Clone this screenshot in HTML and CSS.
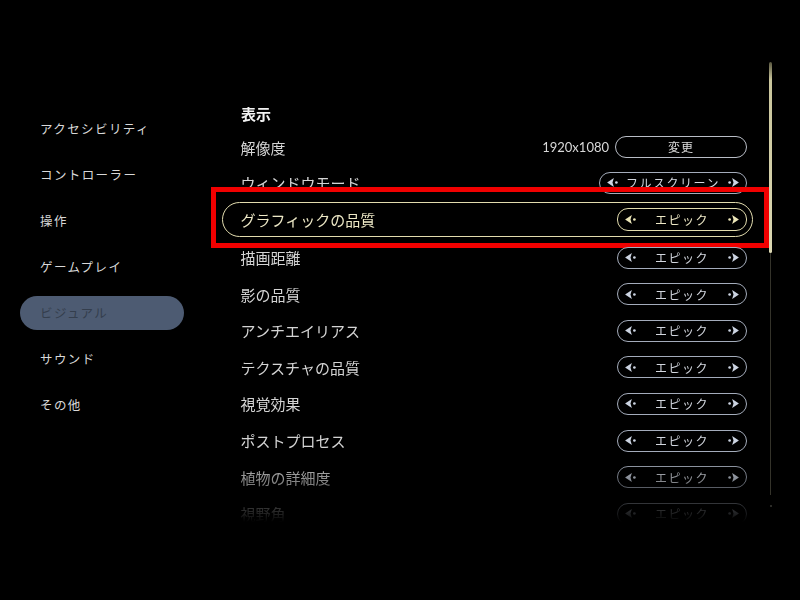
FILE: index.html
```html
<!DOCTYPE html>
<html lang="ja">
<head>
<meta charset="utf-8">
<title>設定 - ビジュアル</title>
<link rel="stylesheet" href="styles.css">
</head>
<body>
<div class="screen">
  <nav class="sidebar">
    <div class="nav-item">アクセシビリティ</div>
    <div class="nav-item">コントローラー</div>
    <div class="nav-item">操作</div>
    <div class="nav-item">ゲームプレイ</div>
    <div class="nav-item active">ビジュアル</div>
    <div class="nav-item">サウンド</div>
    <div class="nav-item">その他</div>
  </nav>
  <main class="main">
    <div class="list">
      <div class="section-title">表示</div>
      <div class="row short">
        <span class="label">解像度</span>
        <div class="control">
          <span class="res">1920x1080</span>
          <span class="button">変更</span>
        </div>
      </div>
      <div class="row">
        <span class="label">ウィンドウモード</span>
        <div class="selector wide">
          <svg class="arrow" viewBox="0 0 12 10"><path d="M0 5 L7.5 0 L6 5 L7.5 10 Z"/><circle cx="10.3" cy="5" r="1.5"/></svg>
          <span class="value">フルスクリーン</span>
          <svg class="arrow" viewBox="0 0 12 10"><path d="M12 5 L4.5 0 L6 5 L4.5 10 Z"/><circle cx="1.7" cy="5" r="1.5"/></svg>
        </div>
      </div>
      <div class="row focused">
        <span class="label">グラフィックの品質</span>
        <div class="selector">
          <svg class="arrow" viewBox="0 0 12 10"><path d="M0 5 L7.5 0 L6 5 L7.5 10 Z"/><circle cx="10.3" cy="5" r="1.5"/></svg>
          <span class="value">エピック</span>
          <svg class="arrow" viewBox="0 0 12 10"><path d="M12 5 L4.5 0 L6 5 L4.5 10 Z"/><circle cx="1.7" cy="5" r="1.5"/></svg>
        </div>
        <div class="callout"></div>
      </div>
      <div class="row">
        <span class="label">描画距離</span>
        <div class="selector">
          <svg class="arrow" viewBox="0 0 12 10"><path d="M0 5 L7.5 0 L6 5 L7.5 10 Z"/><circle cx="10.3" cy="5" r="1.5"/></svg>
          <span class="value">エピック</span>
          <svg class="arrow" viewBox="0 0 12 10"><path d="M12 5 L4.5 0 L6 5 L4.5 10 Z"/><circle cx="1.7" cy="5" r="1.5"/></svg>
        </div>
      </div>
      <div class="row">
        <span class="label">影の品質</span>
        <div class="selector">
          <svg class="arrow" viewBox="0 0 12 10"><path d="M0 5 L7.5 0 L6 5 L7.5 10 Z"/><circle cx="10.3" cy="5" r="1.5"/></svg>
          <span class="value">エピック</span>
          <svg class="arrow" viewBox="0 0 12 10"><path d="M12 5 L4.5 0 L6 5 L4.5 10 Z"/><circle cx="1.7" cy="5" r="1.5"/></svg>
        </div>
      </div>
      <div class="row">
        <span class="label">アンチエイリアス</span>
        <div class="selector">
          <svg class="arrow" viewBox="0 0 12 10"><path d="M0 5 L7.5 0 L6 5 L7.5 10 Z"/><circle cx="10.3" cy="5" r="1.5"/></svg>
          <span class="value">エピック</span>
          <svg class="arrow" viewBox="0 0 12 10"><path d="M12 5 L4.5 0 L6 5 L4.5 10 Z"/><circle cx="1.7" cy="5" r="1.5"/></svg>
        </div>
      </div>
      <div class="row">
        <span class="label">テクスチャの品質</span>
        <div class="selector">
          <svg class="arrow" viewBox="0 0 12 10"><path d="M0 5 L7.5 0 L6 5 L7.5 10 Z"/><circle cx="10.3" cy="5" r="1.5"/></svg>
          <span class="value">エピック</span>
          <svg class="arrow" viewBox="0 0 12 10"><path d="M12 5 L4.5 0 L6 5 L4.5 10 Z"/><circle cx="1.7" cy="5" r="1.5"/></svg>
        </div>
      </div>
      <div class="row">
        <span class="label">視覚効果</span>
        <div class="selector">
          <svg class="arrow" viewBox="0 0 12 10"><path d="M0 5 L7.5 0 L6 5 L7.5 10 Z"/><circle cx="10.3" cy="5" r="1.5"/></svg>
          <span class="value">エピック</span>
          <svg class="arrow" viewBox="0 0 12 10"><path d="M12 5 L4.5 0 L6 5 L4.5 10 Z"/><circle cx="1.7" cy="5" r="1.5"/></svg>
        </div>
      </div>
      <div class="row">
        <span class="label">ポストプロセス</span>
        <div class="selector">
          <svg class="arrow" viewBox="0 0 12 10"><path d="M0 5 L7.5 0 L6 5 L7.5 10 Z"/><circle cx="10.3" cy="5" r="1.5"/></svg>
          <span class="value">エピック</span>
          <svg class="arrow" viewBox="0 0 12 10"><path d="M12 5 L4.5 0 L6 5 L4.5 10 Z"/><circle cx="1.7" cy="5" r="1.5"/></svg>
        </div>
      </div>
      <div class="row">
        <span class="label">植物の詳細度</span>
        <div class="selector">
          <svg class="arrow" viewBox="0 0 12 10"><path d="M0 5 L7.5 0 L6 5 L7.5 10 Z"/><circle cx="10.3" cy="5" r="1.5"/></svg>
          <span class="value">エピック</span>
          <svg class="arrow" viewBox="0 0 12 10"><path d="M12 5 L4.5 0 L6 5 L4.5 10 Z"/><circle cx="1.7" cy="5" r="1.5"/></svg>
        </div>
      </div>
      <div class="row">
        <span class="label">視野角</span>
        <div class="selector">
          <svg class="arrow" viewBox="0 0 12 10"><path d="M0 5 L7.5 0 L6 5 L7.5 10 Z"/><circle cx="10.3" cy="5" r="1.5"/></svg>
          <span class="value">エピック</span>
          <svg class="arrow" viewBox="0 0 12 10"><path d="M12 5 L4.5 0 L6 5 L4.5 10 Z"/><circle cx="1.7" cy="5" r="1.5"/></svg>
        </div>
      </div>
    </div>
    <div class="scrollbar">
      <div class="thumb"></div>
      <div class="track"></div>
      <div class="dot"></div>
    </div>
  </main>
</div>
</body>
</html>
```
FILE: styles.css
```css
html, body {
  margin: 0;
  padding: 0;
  background: #000;
}
body {
  font-family: "Noto Sans CJK JP", "Noto Sans", sans-serif;
  color: #d6d6d6;
}
.screen {
  width: 800px;
  height: 600px;
  display: flex;
  overflow: hidden;
}
.sidebar {
  width: 200px;
  flex: none;
  padding: 112px 0 0 20px;
  box-sizing: border-box;
  display: flex;
  flex-direction: column;
  gap: 12px;
}
.nav-item {
  width: 164px;
  height: 34px;
  line-height: 34px;
  padding-left: 20px;
  box-sizing: border-box;
  border-radius: 17px;
  font-size: 12.5px;
  letter-spacing: 1.4px;
  color: #d8d8d8;
}
.nav-item.active {
  background: #4d5b72;
  color: #343e4d;
}
.main {
  flex: 1;
  display: flex;
  padding-top: 98px;
  box-sizing: border-box;
}
.list {
  padding: 0 16px 0 22px;
  width: 531px;
  flex: none;
  height: 424px;
  overflow: hidden;
  -webkit-mask-image: linear-gradient(to bottom, #000 0, #000 358px, rgba(0,0,0,0.15) 416px, transparent 424px);
  mask-image: linear-gradient(to bottom, #000 0, #000 358px, rgba(0,0,0,0.15) 416px, transparent 424px);
}
.section-title {
  height: 31.7px;
  line-height: 31.7px;
  padding-left: 19px;
  font-size: 15px;
  font-weight: 700;
  color: #f2f2f2;
}
.row {
  position: relative;
  height: 36.6px;
  box-sizing: border-box;
  border: 1.5px solid transparent;
  border-radius: 18px;
  padding: 0 5px 0 17.5px;
  display: flex;
  align-items: center;
  justify-content: space-between;
}
.row.short {
  height: 35px;
}
.label {
  font-size: 15px;
  color: #d4d4d4;
}
.control {
  display: flex;
  align-items: center;
  gap: 6px;
}
.res {
  font-family: Lato, "Liberation Sans", sans-serif;
  font-size: 13px;
  color: #d8d8d8;
}
.button {
  width: 132px;
  height: 22px;
  box-sizing: border-box;
  border: 1.3px solid #b9bdc6;
  border-radius: 11px;
  text-align: center;
  font-size: 12px;
  line-height: 19px;
  letter-spacing: 1px;
  color: #dcdcdc;
}
.selector {
  width: 130px;
  height: 22px;
  box-sizing: border-box;
  border: 1.3px solid #a4acbb;
  border-radius: 11px;
  padding: 0 7px;
  display: flex;
  align-items: center;
  justify-content: space-between;
  color: #d2d6de;
}
.selector.wide {
  width: 148px;
}
.value {
  font-size: 12px;
  letter-spacing: 1.5px;
  line-height: 19px;
}
.arrow {
  width: 11px;
  height: 9px;
  fill: #ccd4e2;
}
.row.focused {
  height: 35.6px;
  margin: 0.4px 0 2px;
  border-color: #e2dcae;
}
.row.focused .label {
  color: #ede8c6;
}
.row.focused .selector {
  border-color: #e2dcae;
  color: #ede8c6;
  height: 23px;
}
.row.focused .arrow {
  fill: #ece6b8;
}
.callout {
  position: absolute;
  left: -12.5px;
  top: -15.5px;
  right: -16.5px;
  bottom: -11.5px;
  border: 5px solid #f10000;
  pointer-events: none;
}
.scrollbar {
  margin-top: -36px;
  width: 3px;
  display: flex;
  flex-direction: column;
  align-items: center;
}
.thumb {
  width: 3px;
  height: 191px;
  border-radius: 2px;
  background: linear-gradient(to bottom, #5a5840 0, #c9c59c 18px, #dcd8b2 100%);
}
.track {
  width: 1px;
  height: 242px;
  background: #34332a;
}
.dot {
  margin-top: 10px;
  width: 2px;
  height: 2px;
  border-radius: 1px;
  background: #3a3a34;
}
```
